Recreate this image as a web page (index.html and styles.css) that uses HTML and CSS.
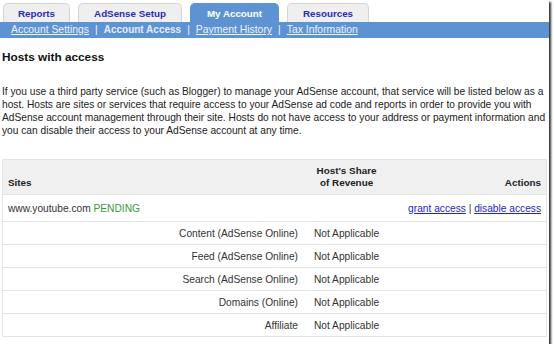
FILE: index.html
```html
<!DOCTYPE html>
<html lang="en">
<head>
  <meta charset="UTF-8" />
  <title>AdSense - Account Access</title>
  <link rel="stylesheet" href="styles.css">
</head>
<body>
  <div class="frame">
    <div class="tabs">
      <a class="tab tab-reports" href="#">Reports</a>
      <a class="tab tab-setup" href="#">AdSense Setup</a>
      <a class="tab tab-account active" href="#">My Account</a>
      <a class="tab tab-resources" href="#">Resources</a>
    </div>
    <div class="subnav">
      <a href="#">Account Settings</a><span class="sep">|</span><span class="current">Account Access</span><span class="sep">|</span><a href="#">Payment History</a><span class="sep">|</span><a href="#">Tax Information</a>
    </div>

    <h2>Hosts with access</h2>
    <p class="intro">If you use a third party service (such as Blogger) to manage your AdSense account, that service will be listed below as a host. Hosts are sites or services that require access to your AdSense ad code and reports in order to provide you with AdSense account management through their site. Hosts do not have access to your address or payment information and you can disable their access to your AdSense account at any time.</p>

    <table class="hosts">
      <thead>
        <tr>
          <th class="col-site">Sites</th>
          <th class="col-share">Host's Share<br>of Revenue</th>
          <th class="col-actions">Actions</th>
        </tr>
      </thead>
      <tbody>
        <tr class="host-row">
          <td class="col-site site-name">www.youtube.com <span class="pending">PENDING</span></td>
          <td></td>
          <td class="col-actions"><a href="#">grant access</a> | <a href="#">disable access</a></td>
        </tr>
        <tr><td class="col-site">Content (AdSense Online)</td><td>Not Applicable</td><td></td></tr>
        <tr><td class="col-site">Feed (AdSense Online)</td><td>Not Applicable</td><td></td></tr>
        <tr><td class="col-site">Search (AdSense Online)</td><td>Not Applicable</td><td></td></tr>
        <tr><td class="col-site">Domains (Online)</td><td>Not Applicable</td><td></td></tr>
        <tr><td class="col-site">Affiliate</td><td>Not Applicable</td><td></td></tr>
      </tbody>
    </table>
  </div>
</body>
</html>
```

FILE: styles.css
```css
body {
  margin: 0;
  background: #fff;
  font-family: "Liberation Sans", Arial, sans-serif;
  color: #222;
}
.frame {
  width: 549px;
  height: 344px;
  overflow: hidden;
  background: #fff;
  box-shadow: 2px 2px 2px #333;
}
.tabs {
  display: flex;
  gap: 8px;
  padding: 3px 0 0 3px;
  height: 19px;
}
.tab {
  display: block;
  height: 19px;
  line-height: 19px;
  text-align: center;
  font-size: 9.8px;
  font-weight: bold;
  color: #2b2bb8;
  text-decoration: none;
  background: #efefef;
  border: 1px solid #d4d4d4;
  border-bottom: none;
  border-radius: 5px 5px 0 0;
  box-sizing: border-box;
}
.tab-reports { width: 67px; }
.tab-setup { width: 104px; }
.tab-account { width: 89px; }
.tab-resources { width: 82px; }
.tab.active {
  background: #5e93d3;
  border-color: #5e93d3;
  color: #fff;
}
.subnav {
  background: #5e93d3;
  height: 16px;
  line-height: 16px;
  padding-left: 11px;
  font-size: 10.4px;
  color: #eef2fb;
}
.subnav a {
  color: #eef2fb;
}
.subnav .current {
  font-weight: bold;
  font-size: 10px;
  color: #e4ecf8;
}
.subnav .sep {
  margin: 0 6px;
}
h2 {
  margin: 12px 0 0 2px;
  font-size: 11.8px;
  font-weight: bold;
  color: #111;
}
.intro {
  margin: 21px 0 0 2px;
  font-size: 10.2px;
  line-height: 13px;
  color: #222;
}
.hosts {
  margin: 22px 0 0 2px;
  width: 545px;
  border-collapse: collapse;
  font-size: 10.2px;
  color: #333;
  border: 1px solid #e4e4e4;
}
.hosts th {
  background: #f0f0f0;
  font-size: 9.9px;
  font-weight: bold;
  color: #222;
  vertical-align: bottom;
  padding: 2px 5px 5px;
  line-height: 12px;
  height: 27px;
}
.hosts td {
  border-top: 1px solid #e4e4e4;
  height: 22px;
  padding: 0 5px;
  white-space: nowrap;
}
.hosts .col-site {
  width: 290px;
  padding-right: 11px;
  text-align: right;
}
.hosts th.col-site,
.hosts td.site-name {
  text-align: left;
}
.col-share {
  width: 60px;
  text-align: center;
}
.col-actions {
  text-align: right;
}
.host-row td {
  height: 26px;
}
.pending {
  color: #3a9a3a;
}
.col-actions a {
  color: #2424c4;
}
```
